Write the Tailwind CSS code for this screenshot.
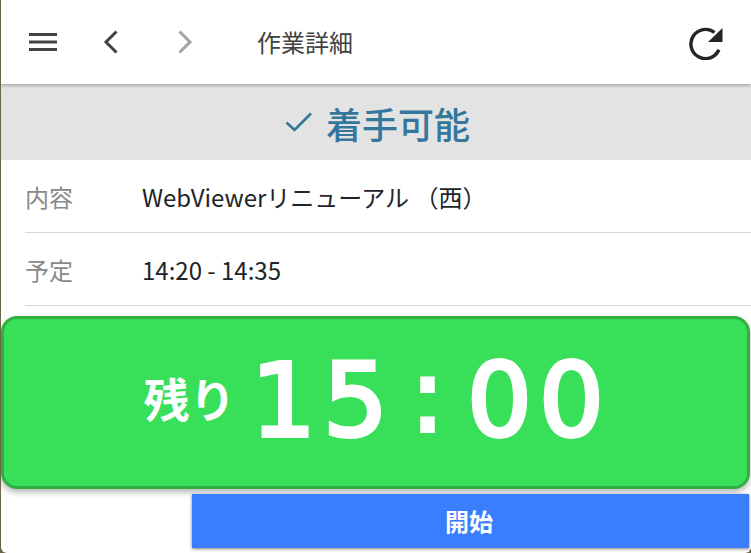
<!DOCTYPE html>
<html lang="ja">
<head>
  <meta charset="UTF-8" />
  <title>作業詳細</title>
  <script src="https://cdn.jsdelivr.net/npm/@tailwindcss/browser@4"></script>
</head>
<body class="h-[553px] w-[751px] overflow-hidden bg-[#6b6645] font-['Noto_Sans_CJK_JP','Noto_Sans',sans-serif]">
  <div class="ml-px h-[553px] w-[750px] overflow-hidden rounded-b-[6px] bg-white">
    <!-- Header -->
    <header class="relative z-10 flex h-[84px] items-center bg-white shadow-[0_1px_4px_rgba(0,0,0,0.35)]">
      <button class="ml-[28px] w-[29px]">
        <svg width="29" height="20" viewBox="0 0 29 20" class="block"><path d="M0 2.5h28M0 10h28M0 17.5h28" stroke="#424242" stroke-width="3" fill="none"/></svg>
      </button>
      <button class="ml-[45px] w-[16px]">
        <svg width="16" height="24" viewBox="0 0 16 24" class="block"><path d="M13.5 1.5 3 12l10.5 10.5" stroke="#424242" stroke-width="3" fill="none"/></svg>
      </button>
      <button class="ml-[58px] w-[16px]">
        <svg width="16" height="24" viewBox="0 0 16 24" class="block"><path d="M2.5 1.5 13 12 2.5 22.5" stroke="#a3a3a3" stroke-width="3" fill="none"/></svg>
      </button>
      <h1 class="ml-[64px] text-[24px] leading-none font-normal text-[#424242]">作業詳細</h1>
      <button class="mr-[27px] ml-auto">
        <svg width="36" height="36" viewBox="0 0 36 36" class="block"><path d="M30.9 25.8A14.6 14.6 0 1 1 26.5 8.5" stroke="#212529" stroke-width="3.4" fill="none"/><path d="M34.5 4v14H20z" fill="#212529"/></svg>
      </button>
    </header>

    <!-- Status -->
    <div class="flex h-[76px] items-center justify-center gap-[13px] bg-[#e3e3e3] pl-[3px] text-[#34779a]">
      <svg width="28" height="22" viewBox="0 0 28 22"><path d="M1.5 11.5 9.5 19 26 2.5" stroke="#34779a" stroke-width="2.6" fill="none"/></svg>
      <span class="pt-[2px] text-[36px] leading-none font-medium">着手可能</span>
    </div>

    <!-- Details -->
    <dl class="pl-[24px]">
      <div class="flex h-[73px] items-center border-b border-[#d9d9d9] pt-[2px]">
        <dt class="w-[117px] text-[24px] text-[#8a8a8a]">内容</dt>
        <dd class="text-[24px] text-[#212529]">WebViewerリニューアル （西）</dd>
      </div>
      <div class="flex h-[73px] items-center border-b border-[#d9d9d9] pt-[2px]">
        <dt class="w-[117px] text-[24px] text-[#8a8a8a]">予定</dt>
        <dd class="text-[24px] text-[#212529]">14:20 - 14:35</dd>
      </div>
    </dl>

    <!-- Timer -->
    <div class="mt-[10px] flex h-[173px] w-[749px] items-center justify-center gap-[12px] rounded-[16px] border-[3px] border-[#30b040] bg-[#38e05a] text-white shadow-[0_3px_6px_rgba(0,0,0,0.3)]">
      <span class="mb-[12px] text-[46px] leading-none font-bold">残り</span>
      <div class="mb-[4px] flex font-['DejaVu_Sans',sans-serif] text-[102px] leading-none [-webkit-text-stroke:4px_white] [&>span]:w-[72px] [&>span]:text-center">
        <span>1</span><span>5</span><span class="-mt-[5px]">:</span><span>0</span><span>0</span>
      </div>
    </div>

    <!-- Start button -->
    <div class="mt-[5px] flex justify-end pr-[2px]">
      <button class="h-[54px] w-[557px] bg-[#3b7dff] pr-[3px] text-[24px] font-bold text-white shadow-[0_1px_3px_rgba(0,0,0,0.5)]">開始</button>
    </div>
  </div>
</body>
</html>
